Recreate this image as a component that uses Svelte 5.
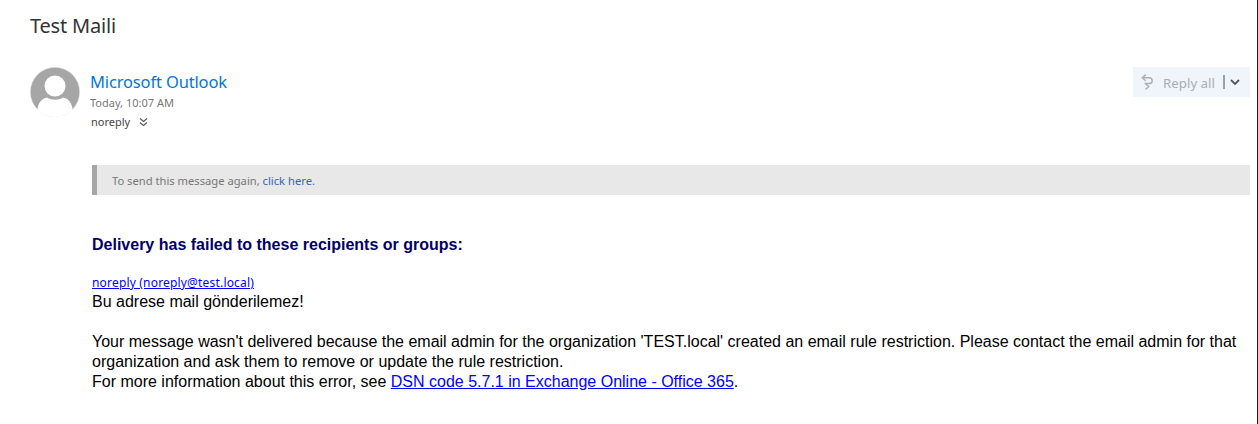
<script>
  const recipient = 'noreply';
</script>

<div class="page">
  <h1 class="subject">Test Maili</h1>
  <header class="head">
    <svg class="avatar" viewBox="0 0 50 50" aria-hidden="true">
      <defs><clipPath id="c"><circle cx="25" cy="25" r="25" /></clipPath></defs>
      <circle cx="25" cy="25" r="24.700" fill="#a6a6a6" stroke="#e6e6e6" stroke-width="0.600" />
      <g clip-path="url(#c)">
        <path d="M7.500 50C6 39 10 31.500 17 30.500c2.500 1.500 5 2.200 8 2.200s5.500-.7 8-2.200c7 1 11 8.500 9.500 19.500z" fill="#fff" />
      </g>
      <circle cx="25" cy="19" r="10.500" fill="#fff" />
    </svg>
    <div class="who">
      <div class="sender">Microsoft Outlook</div>
      <div class="date">Today, 10:07 AM</div>
      <div class="to">
        <span>{recipient}</span>
        <svg class="more" viewBox="0 0 9 10" aria-hidden="true"><path d="M1 1.500l3.500 3 3.500-3M1 5.500l3.500 3 3.500-3" fill="none" stroke="#555" stroke-width="1.100" /></svg>
      </div>
    </div>
    <div class="reply">
      <svg class="reply-ico" viewBox="0 0 12 16" aria-hidden="true"><path d="M4.800 .6L1.300 3.800 4.800 7M1.300 3.800H8c2.200 0 3.200 1.400 3.200 2.900s-1 2.900-3.200 2.900H3.500M4.500 9.600L7.800 12.500 4.500 15.400" fill="none" stroke="#adb1b5" stroke-width="1.500" /></svg>
      <span class="reply-label">Reply all</span>
      <i class="sep"></i>
      <svg class="chev" viewBox="0 0 10 7" aria-hidden="true"><path d="M1 1l4 4 4-4" fill="none" stroke="#555" stroke-width="1.800" /></svg>
    </div>
  </header>

  <main class="body">
    <div class="notice">To send this message again, <a href="#r">click here.</a></div>
    <div class="mail">
      <p class="failed">Delivery has failed to these recipients or groups:</p>
      <a class="addr" href="#a">noreply (noreply@test.local)</a>
      <p class="l">Bu adrese mail gönderilemez!</p>
      <p class="l para">Your message wasn't delivered because the email admin for the organization 'TEST.local' created an email rule restriction. Please contact the email admin for that organization and ask them to remove or update the rule restriction.</p>
      <p class="l info">For more information about this error, see <a href="#d">DSN code 5.7.1 in Exchange Online - Office 365</a>.</p>
    </div>
  </main>
</div>

<style>
  :global(body) { margin: 0; background: #fff; }
  .page {
    box-sizing: border-box;
    height: 424px;
    overflow: hidden;
    padding: 12px 7px 0 30px;
    border-right: 1px solid #1a1a1a;
    font-family: "Noto Sans", "Open Sans", sans-serif;
  }
  .subject { margin: 0; font-size: 20px; letter-spacing: -0.2px; line-height: 28px; font-weight: 400; color: #333; }
  .head { display: flex; margin-top: 27px; }
  .avatar { width: 50px; height: 50px; flex: none; }
  .who { margin-left: 10px; flex: 1; }
  .sender { font-size: 16.500px; letter-spacing: -0.150px; line-height: 24px; color: #0078d7; margin-top: 3px; }
  .date { font-size: 11px; line-height: 16px; color: #777; margin-top: 1px; }
  .to { display: flex; align-items: center; gap: 8px; font-size: 11px; line-height: 18px; color: #444; margin-top: 2px; padding-left: 1px; }
  .more { width: 9px; height: 10px; margin-left: 1px; }
  .reply {
    display: flex; align-items: center;
    width: 117px; height: 30px; box-sizing: border-box; padding-left: 8px;
    background: #eff5fb;
  }
  .reply-ico { width: 12px; height: 16px; margin-top: -1px; flex: none; }
  .reply-label { margin: 2px 0 0 10px; font-size: 13.300px; color: #a9adb3; }
  .sep { width: 2px; height: 14px; background: #94a2b2; margin-left: 8px; }
  .chev { width: 10px; height: 7px; margin-left: 5px; }
  .body { margin: 34px 0 0 62px; }
  .notice {
    box-sizing: border-box; height: 30px; line-height: 31px;
    padding-left: 15px; border-left: 5px solid #a6a6a6;
    background: #e8e8e8; font-size: 11.200px; color: #777;
  }
  .notice a { color: #3c64b4; text-decoration: none; }
  .mail { margin-top: 40px; font-family: "Liberation Sans", Arial, sans-serif; font-size: 16px; line-height: 19px; color: #000; }
  .mail p { margin: 0; }
  .failed { font-weight: 700; color: #000066; }
  .addr { display: block; margin-top: 19px; font-family: "Noto Sans", sans-serif; font-size: 12px; letter-spacing: 0.180px; line-height: 19px; }
  .mail .para { margin-top: 21px; line-height: 20px; }
  .info { line-height: 20px; }
  .mail a { color: #0000ff; }
</style>
